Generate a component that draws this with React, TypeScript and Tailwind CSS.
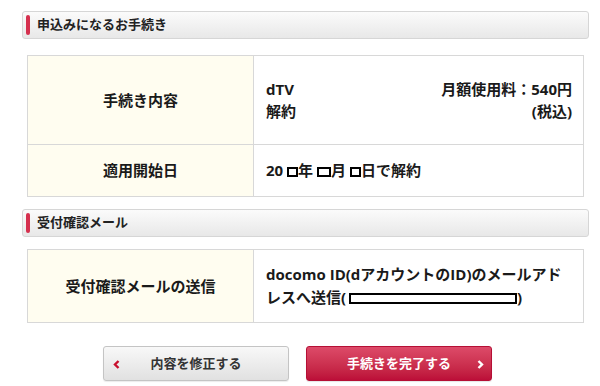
import React from "react";

const font = { fontFamily: '"Open Sans", "Noto Sans CJK JP", sans-serif' };

function SectionHeader({ title }: { title: string }) {
  return (
    <div className="flex h-[28px] items-center rounded-[3px] border border-[#d6d6d6] bg-gradient-to-b from-[#fbfbfb] to-[#e8e8e8]">
      <div className="ml-[3px] h-[20px] w-[4px] rounded-[2px] bg-[#d5304e]" />
      <div className="ml-[7px] text-[13px] font-bold text-[#222]">{title}</div>
    </div>
  );
}

function Box({ w }: { w: string }) {
  return <span className={`inline-block h-[10px] ${w} border-2 border-black align-[-1px]`} />;
}

export default function App() {
  return (
    <div className="w-[600px] h-[386px] bg-white overflow-hidden" style={font}>
      <div className="ml-[22px] w-[567px] pt-[11px]">
        <SectionHeader title="申込みになるお手続き" />
        <div className="mx-[5px] mt-[16px] border border-[#d8d8d8] text-[15px] font-bold text-[#1a1a1a]">
          <div className="flex h-[89px] border-b border-[#d8d8d8]">
            <div className="flex w-[226px] items-center justify-center border-r border-[#d8d8d8] bg-[#fffdf0]">
              手続き内容
            </div>
            <div className="flex flex-1 items-center pl-[12px] pr-[11px] leading-[22px]">
              <div className="flex w-full justify-between">
                <div>
                  <div>dTV</div>
                  <div>解約</div>
                </div>
                <div className="text-right">
                  <div>月額使用料：540円</div>
                  <div>(税込)</div>
                </div>
              </div>
            </div>
          </div>
          <div className="flex h-[51px]">
            <div className="flex w-[226px] items-center justify-center border-r border-[#d8d8d8] bg-[#fffdf0]">
              適用開始日
            </div>
            <div className="flex flex-1 items-center pl-[12px]">
              <span>
                20 <Box w="w-[11px]" />年 <Box w="w-[14px]" />月 <Box w="w-[11px]" />日で解約
              </span>
            </div>
          </div>
        </div>

        <div className="mt-[12px]">
          <SectionHeader title="受付確認メール" />
        </div>
        <div className="mx-[5px] mt-[12px] border border-[#d8d8d8] text-[15px] font-bold text-[#1a1a1a]">
          <div className="flex h-[72px]">
            <div className="flex w-[226px] items-center justify-center border-r border-[#d8d8d8] bg-[#fffdf0]">
              受付確認メールの送信
            </div>
            <div className="flex flex-1 items-center pl-[12px] pr-[10px] leading-[23px]">
              <div>
                docomo ID(dアカウントのID)のメールアドレスへ送信(
                <span className="ml-[3px] inline-block h-[11px] w-[168px] border-2 border-black align-[-1px]" />)
              </div>
            </div>
          </div>
        </div>

        <div className="mt-[23px] flex gap-[17px] pl-[81px]">
          <button className="relative flex h-[35px] w-[186px] items-center justify-center rounded-[3px] border border-[#c4c4c4] bg-gradient-to-b from-[#f8f8f8] to-[#e1e1e1] text-[13px] font-bold text-[#333] shadow-[0_1px_1px_rgba(0,0,0,0.08)]">
            <svg className="absolute left-[9px] top-[13px]" width="7" height="9" viewBox="0 0 7 9">
              <path d="M5.5 1 L2 4.5 L5.5 8" fill="none" stroke="#c8102e" strokeWidth="2.4" />
            </svg>
            内容を修正する
          </button>
          <button className="relative flex h-[35px] w-[186px] items-center justify-center rounded-[3px] border border-[#b50f35] bg-gradient-to-b from-[#dd4a69] to-[#bc0d38] text-[13px] font-bold text-white shadow-[0_1px_1px_rgba(0,0,0,0.1)]">
            手続きを完了する
            <svg className="absolute right-[7px] top-[13px]" width="7" height="9" viewBox="0 0 7 9">
              <path d="M1.5 1 L5 4.5 L1.5 8" fill="none" stroke="#ffffff" strokeWidth="2.4" />
            </svg>
          </button>
        </div>
      </div>
    </div>
  );
}
